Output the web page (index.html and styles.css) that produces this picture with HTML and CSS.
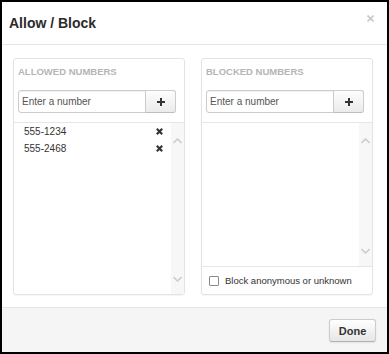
FILE: index.html
```html
<!DOCTYPE html>
<html lang="en">
<head>
    <meta charset="UTF-8">
    <title>Allow / Block</title>
    <link rel="stylesheet" href="styles.css">
</head>
<body>

<div class="modal">
    <div class="modal-header">
        <h3 class="modal-title">Allow / Block</h3>
        <span class="close">
            <svg width="7" height="7" viewBox="0 0 7 7"><path d="M0.5 0.5L6.5 6.5M6.5 0.5L0.5 6.5" stroke="#c9c9c9" stroke-width="1.6"/></svg>
        </span>
    </div>

    <div class="modal-body">
        <div class="panel">
            <div class="panel-head">
                <div class="panel-title">Allowed numbers</div>
                <div class="input-group">
                    <input type="text" class="textfield" placeholder="Enter a number"/>
                    <button class="add-btn">
                        <svg width="8" height="8" viewBox="0 0 8 8"><path d="M4 0V8M0 4H8" stroke="#333" stroke-width="2"/></svg>
                    </button>
                </div>
            </div>
            <div class="list">
                <ul class="numbers">
                    <li>
                        <span>555-1234</span>
                        <svg width="7" height="7" viewBox="0 0 7 7"><path d="M0.8 0.8L6.2 6.2M6.2 0.8L0.8 6.2" stroke="#333" stroke-width="2.1"/></svg>
                    </li>
                    <li>
                        <span>555-2468</span>
                        <svg width="7" height="7" viewBox="0 0 7 7"><path d="M0.8 0.8L6.2 6.2M6.2 0.8L0.8 6.2" stroke="#333" stroke-width="2.1"/></svg>
                    </li>
                </ul>
                <div class="scrollbar">
                    <svg width="9" height="6" viewBox="0 0 9 6"><path d="M0.5 5L4.5 1L8.5 5" fill="none" stroke="#cdcdcd" stroke-width="1.6"/></svg>
                    <svg width="9" height="6" viewBox="0 0 9 6"><path d="M0.5 1L4.5 5L8.5 1" fill="none" stroke="#cdcdcd" stroke-width="1.6"/></svg>
                </div>
            </div>
        </div>

        <div class="panel">
            <div class="panel-head">
                <div class="panel-title">Blocked numbers</div>
                <div class="input-group">
                    <input type="text" class="textfield" placeholder="Enter a number"/>
                    <button class="add-btn">
                        <svg width="8" height="8" viewBox="0 0 8 8"><path d="M4 0V8M0 4H8" stroke="#333" stroke-width="2"/></svg>
                    </button>
                </div>
            </div>
            <div class="list">
                <ul class="numbers"></ul>
                <div class="scrollbar">
                    <svg width="9" height="6" viewBox="0 0 9 6"><path d="M0.5 5L4.5 1L8.5 5" fill="none" stroke="#cdcdcd" stroke-width="1.6"/></svg>
                    <svg width="9" height="6" viewBox="0 0 9 6"><path d="M0.5 1L4.5 5L8.5 1" fill="none" stroke="#cdcdcd" stroke-width="1.6"/></svg>
                </div>
            </div>
            <label class="panel-foot">
                <input type="checkbox" class="check"/> Block anonymous or unknown
            </label>
        </div>
    </div>

    <div class="modal-footer">
        <button class="done-btn">Done</button>
    </div>
</div>

</body>
</html>
```

FILE: styles.css
```css
html, body{
    margin: 0;
    padding: 0;
}
body{
    font-family: "Liberation Sans", Arial, sans-serif;
    color: #333;
    background: #fff;
}
ul{
    margin: 0;
    padding: 0;
}
li{
    list-style: none;
}
.modal{
    box-sizing: border-box;
    width: 389px;
    height: 354px;
    border: 2px solid #000;
    display: flex;
    flex-direction: column;
    background: #fff;
}
.modal-header{
    display: flex;
    justify-content: space-between;
    padding: 11px 13px 11px 7px;
    border-bottom: 1px solid #e5e5e5;
}
.modal-title{
    margin: 0;
    font-size: 14px;
    line-height: 20px;
    font-weight: bold;
    color: #2b2b2b;
}
.close{
    padding-top: 2px;
    line-height: 0;
}
.modal-body{
    flex: 1;
    display: grid;
    grid-template-columns: 172px 172px;
    column-gap: 16px;
    padding: 13px 0 12px 11px;
}
.panel{
    display: flex;
    flex-direction: column;
    border: 1px solid #e3e3e3;
    border-radius: 3px;
    box-shadow: 0 1px 1px rgba(0,0,0,0.04);
    overflow: hidden;
}
.panel-head{
    padding: 7px 8px 9px 4px;
}
.panel-title{
    font-size: 9.5px;
    line-height: 12px;
    font-weight: bold;
    text-transform: uppercase;
    color: #b5b5b5;
    margin-bottom: 12px;
}
.input-group{
    display: flex;
    height: 23px;
}
.textfield{
    flex: 1;
    min-width: 0;
    box-sizing: border-box;
    height: 23px;
    margin: 0;
    padding: 0 3px;
    border: 1px solid #ccc;
    border-radius: 3px 0 0 3px;
    box-shadow: inset 0 1px 1px rgba(0,0,0,0.06);
    font-family: inherit;
    font-size: 10px;
    color: #333;
    outline: none;
}
.textfield::placeholder{
    color: #555;
}
.add-btn{
    box-sizing: border-box;
    width: 31px;
    height: 23px;
    margin: 0 0 0 -1px;
    padding: 0;
    border: 1px solid #ccc;
    border-bottom-color: #bdbdbd;
    border-radius: 0 3px 3px 0;
    background: linear-gradient(#fdfdfd, #ebebeb);
    display: flex;
    align-items: center;
    justify-content: center;
}
.list{
    flex: 1;
    display: flex;
    border-top: 1px solid #e6e6e6;
}
.numbers{
    flex: 1;
    padding: 0 8px 0 10px;
    font-size: 10px;
}
.numbers li{
    display: flex;
    justify-content: space-between;
    align-items: center;
    height: 17px;
}
.scrollbar{
    width: 13px;
    background: #f7f7f7;
    display: flex;
    flex-direction: column;
    justify-content: space-between;
    align-items: center;
    padding: 15px 0 12px;
}
.panel-foot{
    display: flex;
    align-items: center;
    height: 27px;
    padding-left: 7px;
    border-top: 1px solid #e6e6e6;
    font-size: 9.5px;
    color: #333;
}
.check{
    appearance: none;
    -webkit-appearance: none;
    box-sizing: border-box;
    width: 10px;
    height: 10px;
    margin: 0 6px 0 0;
    border: 1px solid #8a8a8a;
    border-radius: 1px;
    background: #fff;
}
.modal-footer{
    display: flex;
    justify-content: flex-end;
    padding: 11px 11px 10px;
    border-top: 1px solid #e5e5e5;
    background: #f5f5f5;
}
.done-btn{
    box-sizing: border-box;
    width: 47px;
    height: 23px;
    padding: 0;
    border: 1px solid #ccc;
    border-bottom-color: #b3b3b3;
    border-radius: 3px;
    background: linear-gradient(#fff, #e6e6e6);
    box-shadow: 0 1px 2px rgba(0,0,0,0.08);
    font-family: inherit;
    font-size: 11px;
    font-weight: bold;
    color: #333;
}
```
